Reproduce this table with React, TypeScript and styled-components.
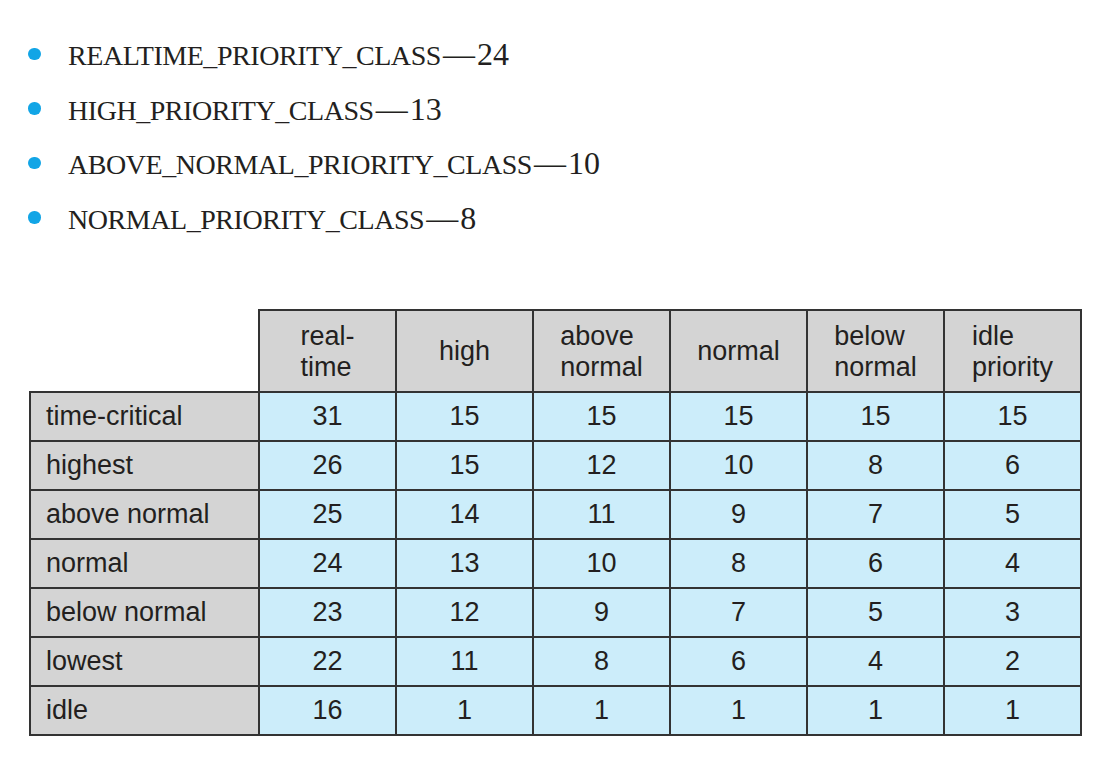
import React from "react";
import styled, { createGlobalStyle } from "styled-components";

const Global = createGlobalStyle`
  html, body { margin: 0; padding: 0; background: #ffffff; }
  body { width: 1110px; height: 771px; overflow: hidden; }
`;

const Page = styled.div`
  padding: 27px 0 0 28px;
  color: #231f20;
`;

const List = styled.ul`
  list-style: none;
  margin: 0;
  padding: 0;
`;

const Item = styled.li`
  display: flex;
  align-items: center;
  height: 54.5px;
  gap: 27.5px;
`;

const Bullet = styled.span`
  width: 12.5px;
  height: 12.5px;
  border-radius: 50%;
  background: #12a5e6;
  flex: none;
  margin-top: -1px;
`;

const ItemText = styled.span`
  font-family: "Liberation Serif", "Times New Roman", serif;
  font-size: 32px;
  line-height: 54.5px;
  white-space: nowrap;
`;

const ClassName = styled.span`
  font-size: 28px;
  line-height: 1;
  letter-spacing: -0.45px;
`;

const Dash = styled.span`
  margin: 0 2px;
`;

const Table = styled.table`
  margin: 64px 0 0 1px;
  border-collapse: collapse;
  table-layout: fixed;
  width: 1051px;
  font-family: "Liberation Sans", Arial, sans-serif;
  font-size: 27px;
  color: #231f20;
`;

const Corner = styled.th`
  border: none;
  background: transparent;
`;

const HeadCell = styled.th`
  height: 80px;
  padding: 0;
  border: 2px solid #333333;
  background: #d4d4d4;
  font-weight: normal;
  text-align: center;
  vertical-align: middle;
  line-height: 31px;
`;

const HeadText = styled.span`
  display: inline-block;
  text-align: left;
  margin-top: 1px;
`;

const LabelCell = styled.td`
  height: 47px;
  padding: 0 0 0 15px;
  border: 2px solid #333333;
  background: #d4d4d4;
  text-align: left;
  vertical-align: middle;
`;

const ValueCell = styled.td`
  height: 47px;
  padding: 0;
  border: 2px solid #333333;
  background: #ccedfa;
  text-align: center;
  vertical-align: middle;
`;

const classes: [string, string][] = [
  ["REALTIME_PRIORITY_CLASS", "24"],
  ["HIGH_PRIORITY_CLASS", "13"],
  ["ABOVE_NORMAL_PRIORITY_CLASS", "10"],
  ["NORMAL_PRIORITY_CLASS", "8"],
];

const headers: string[][] = [
  ["real-", "time"],
  ["high"],
  ["above", "normal"],
  ["normal"],
  ["below", "normal"],
  ["idle", "priority"],
];

const rows: [string, number[]][] = [
  ["time-critical", [31, 15, 15, 15, 15, 15]],
  ["highest", [26, 15, 12, 10, 8, 6]],
  ["above normal", [25, 14, 11, 9, 7, 5]],
  ["normal", [24, 13, 10, 8, 6, 4]],
  ["below normal", [23, 12, 9, 7, 5, 3]],
  ["lowest", [22, 11, 8, 6, 4, 2]],
  ["idle", [16, 1, 1, 1, 1, 1]],
];

export default function App() {
  return (
    <>
      <Global />
      <Page>
        <List>
          {classes.map(([name, value]) => (
            <Item key={name}>
              <Bullet />
              <ItemText>
                <ClassName>{name}</ClassName>
                <Dash>—</Dash>
                {value}
              </ItemText>
            </Item>
          ))}
        </List>
        <Table>
          <colgroup>
            <col style={{ width: 229 }} />
            {headers.map((_, i) => (
              <col key={i} style={{ width: 137 }} />
            ))}
          </colgroup>
          <thead>
            <tr>
              <Corner />
              {headers.map((lines, i) => (
                <HeadCell key={i}>
                  <HeadText>
                    {lines.map((l, j) => (
                      <React.Fragment key={j}>
                        {j > 0 && <br />}
                        {l}
                      </React.Fragment>
                    ))}
                  </HeadText>
                </HeadCell>
              ))}
            </tr>
          </thead>
          <tbody>
            {rows.map(([label, vals]) => (
              <tr key={label}>
                <LabelCell>{label}</LabelCell>
                {vals.map((v, i) => (
                  <ValueCell key={i}>{v}</ValueCell>
                ))}
              </tr>
            ))}
          </tbody>
        </Table>
      </Page>
    </>
  );
}
